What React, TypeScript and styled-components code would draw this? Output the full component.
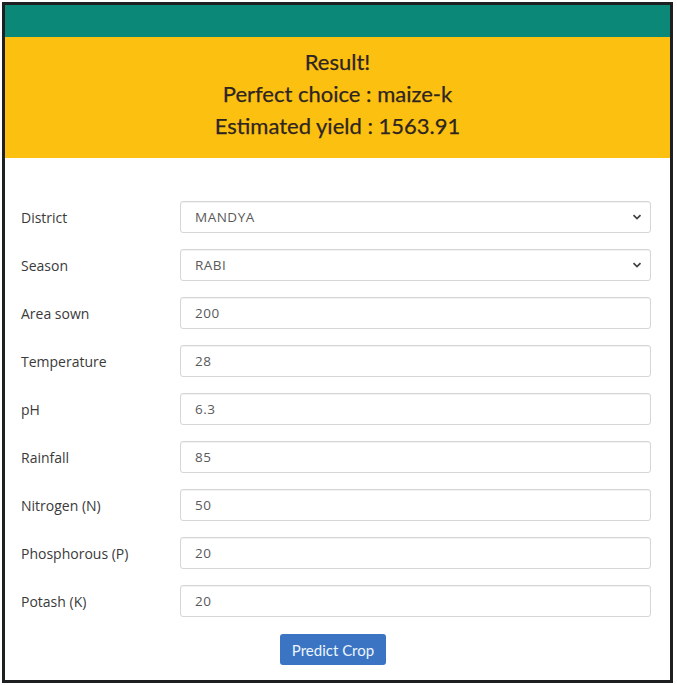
import React from "react";
import styled, { createGlobalStyle } from "styled-components";

const Global = createGlobalStyle`
  html, body { margin: 0; padding: 0; background: #ffffff; }
  body { font-family: "Open Sans", "Noto Sans", sans-serif; }
  * { box-sizing: border-box; }
`;

const Frame = styled.div`
  margin: 2px 4px 0 2px;
  width: 671px;
  height: 681px;
  border: 3px solid #1d1f21;
  display: flex;
  flex-direction: column;
  background: #fff;
`;

const TopBar = styled.div`
  height: 32px;
  background: #0b8878;
  flex: none;
`;

const ResultBanner = styled.div`
  background: #fcc010;
  height: 121px;
  flex: none;
  display: flex;
  flex-direction: column;
  align-items: center;
  justify-content: center;
  padding-bottom: 8px;
  color: #2e2420;
  font-family: "Lato", "Open Sans", sans-serif;
  font-size: 22px;
  line-height: 32px;
  -webkit-text-stroke: 0.25px #2e2420;
`;

const BannerLine = styled.div``;

const Form = styled.form`
  display: flex;
  flex-direction: column;
  gap: 16px;
  padding: 43px 19px 0 16px;
`;

const Row = styled.div`
  display: grid;
  grid-template-columns: 159px 1fr;
  align-items: center;
  height: 32px;
`;

const Label = styled.label`
  font-size: 14px;
  color: #3a3a3a;
`;

const Field = styled.div`
  position: relative;
  height: 32px;
  border: 1px solid #d6d6d6;
  border-radius: 3px;
  display: flex;
  align-items: center;
  padding: 0 14px;
  font-size: 13.5px;
  color: #5a5a5a;
  letter-spacing: 0.5px;
  box-shadow: inset 0 1px 1px rgba(0, 0, 0, 0.06);
`;

const Chevron = styled.svg`
  position: absolute;
  right: 8px;
  top: 50%;
  margin-top: -4px;
`;

const ButtonRow = styled.div`
  display: flex;
  justify-content: center;
  margin-top: 1px;
  padding-right: 6px;
`;

const Button = styled.button`
  width: 106px;
  height: 31px;
  border: none;
  border-radius: 3px;
  background: #3a74c2;
  color: #eef4ff;
  font-family: "Lato", "Open Sans", sans-serif;
  font-size: 15px;
  padding: 0;
`;

const fields: { label: string; value: string; select?: boolean }[] = [
  { label: "District", value: "MANDYA", select: true },
  { label: "Season", value: "RABI", select: true },
  { label: "Area sown", value: "200" },
  { label: "Temperature", value: "28" },
  { label: "pH", value: "6.3" },
  { label: "Rainfall", value: "85" },
  { label: "Nitrogen (N)", value: "50" },
  { label: "Phosphorous (P)", value: "20" },
  { label: "Potash (K)", value: "20" },
];

export default function App() {
  return (
    <>
      <Global />
      <Frame>
        <TopBar />
        <ResultBanner>
          <BannerLine>Result!</BannerLine>
          <BannerLine>Perfect choice : maize-k</BannerLine>
          <BannerLine>Estimated yield : 1563.91</BannerLine>
        </ResultBanner>
        <Form onSubmit={(e) => e.preventDefault()}>
          {fields.map((f) => (
            <Row key={f.label}>
              <Label>{f.label}</Label>
              <Field>
                {f.value}
                {f.select && (
                  <Chevron width="10" height="8" viewBox="0 0 10 8">
                    <path d="M1.5 2.2 L5 5.6 L8.5 2.2" fill="none" stroke="#444" strokeWidth="1.8" />
                  </Chevron>
                )}
              </Field>
            </Row>
          ))}
          <ButtonRow>
            <Button type="submit">Predict Crop</Button>
          </ButtonRow>
        </Form>
      </Frame>
    </>
  );
}
